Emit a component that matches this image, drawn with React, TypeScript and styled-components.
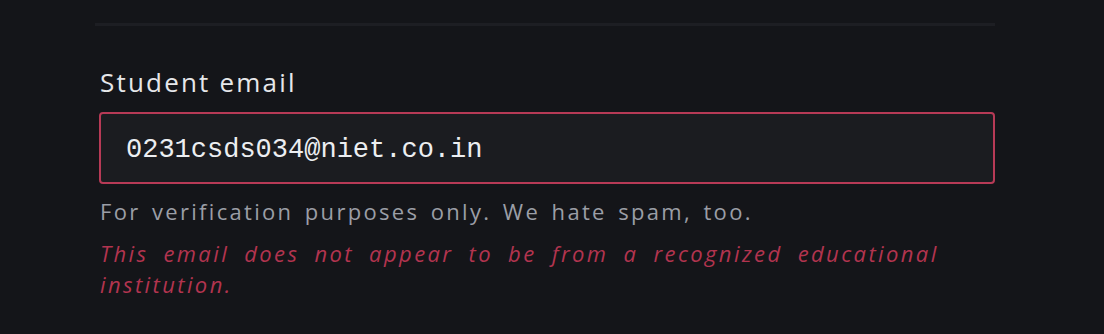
import React from "react";
import styled, { createGlobalStyle } from "styled-components";

const Global = createGlobalStyle`
  html, body { margin: 0; padding: 0; background: #141519; }
  body { font-family: "Open Sans", "DejaVu Sans", sans-serif; }
`;

const Page = styled.div`
  width: 1104px;
  height: 334px;
  background: #141519;
  box-sizing: border-box;
  padding: 0 109px 0 99px;
  overflow: hidden;
`;

const Divider = styled.hr`
  margin: 23px 0 0 -4px;
  border: none;
  height: 3px;
  background: #1d1e23;
`;

const Field = styled.div`
  display: flex;
  flex-direction: column;
  margin-top: 40px;
`;

const Label = styled.label`
  font-size: 26px;
  line-height: 32px;
  letter-spacing: 2.2px;
  color: #e6e7ea;
  margin-left: 1px;
`;

const Input = styled.input`
  margin-top: 14px;
  height: 72px;
  box-sizing: border-box;
  border: 2px solid #b73a56;
  border-radius: 4px;
  background: #1b1c20;
  color: #eceef1;
  font-family: "Liberation Mono", "DejaVu Sans Mono", monospace;
  font-size: 27px;
  padding: 4px 25px 0;
  outline: none;
`;

const Help = styled.p`
  margin: 13px 0 0 1px;
  font-size: 22px;
  line-height: 28px;
  letter-spacing: 2.3px;
  word-spacing: 3.5px;
  color: #9b9ea6;
`;

const ErrorText = styled.p<{ $tone?: string }>`
  margin: 13px 0 0 1px;
  font-size: 22px;
  line-height: 31px;
  font-style: italic;
  letter-spacing: 2.4px;
  word-spacing: 7px;
  color: ${(p) => p.$tone ?? "#b2344f"};
`;

export default function App() {
  return (
    <>
      <Global />
      <Page>
        <Divider />
        <Field>
          <Label htmlFor="email">Student email</Label>
          <Input id="email" defaultValue="0231csds034@niet.co.in" />
          <Help>For verification purposes only. We hate spam, too.</Help>
          <ErrorText>
            This email does not appear to be from a recognized educational institution.
          </ErrorText>
        </Field>
      </Page>
    </>
  );
}
